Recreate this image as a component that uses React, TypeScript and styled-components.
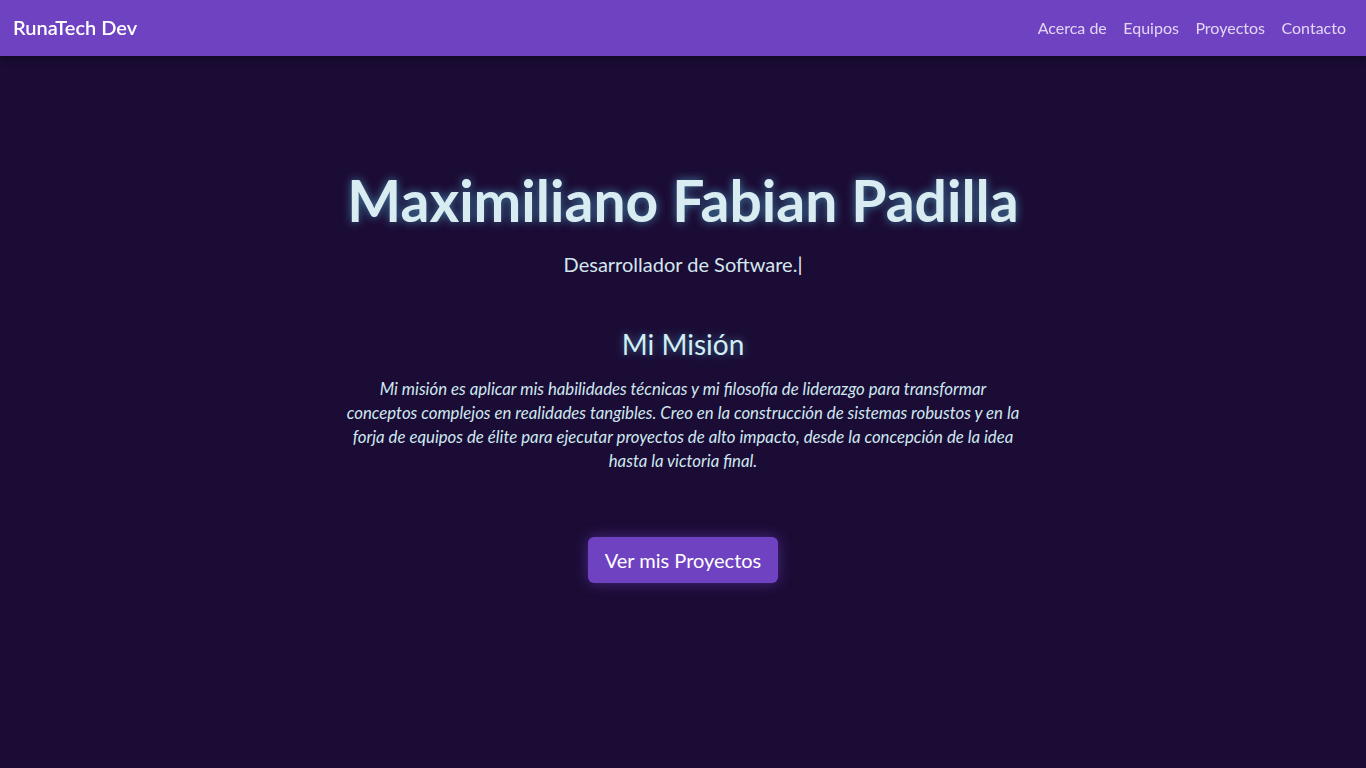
import React from "react";
import styled, { createGlobalStyle } from "styled-components";

const GlobalStyle = createGlobalStyle`
  html, body {
    margin: 0;
    padding: 0;
    background: #1b0c35;
    font-family: Lato, "Open Sans", sans-serif;
  }
  ::-webkit-scrollbar {
    width: 4px;
  }
  ::-webkit-scrollbar-track {
    background: #1b0c35;
  }
  ::-webkit-scrollbar-thumb {
    background: #8a8494;
  }
`;

const Header = styled.header`
  position: fixed;
  top: 0;
  left: 0;
  right: 0;
  height: 56px;
  display: flex;
  align-items: center;
  justify-content: space-between;
  padding: 0 20px 0 13px;
  background: #6f42c1;
  box-shadow: 0 2px 8px rgba(0, 0, 0, 0.45);
  z-index: 10;
`;

const Brand = styled.a`
  color: #ffffff;
  font-size: 20px;
  font-weight: 600;
  line-height: 24px;
  margin-top: -2px;
  text-decoration: none;
`;

const Nav = styled.nav`
  display: flex;
  gap: 16.5px;
  margin-top: -2px;
`;

const NavLink = styled.a`
  color: #e2d6f6;
  font-size: 16px;
  text-decoration: none;
`;

const Hero = styled.section`
  min-height: 100vh;
  box-sizing: border-box;
  display: flex;
  flex-direction: column;
  align-items: center;
  padding-top: 168px;
  text-align: center;
`;

const Title = styled.h1`
  margin: 0;
  font-size: 57px;
  font-weight: 700;
  line-height: 64px;
  color: #d9ecf2;
  text-shadow: 0 0 10px rgba(100, 220, 255, 0.55);
`;

const Subtitle = styled.p`
  margin: 18px 0 0;
  font-size: 20px;
  line-height: 28px;
  color: #d4e6ee;
`;

const Cursor = styled.span`
  color: #e6f2f6;
`;

const MissionTitle = styled.h2`
  margin: 49px 0 0;
  font-size: 28px;
  font-weight: 400;
  line-height: 34px;
  color: #d2eef4;
  text-shadow: 0 0 8px rgba(100, 220, 255, 0.45);
`;

const MissionText = styled.p`
  margin: 16px 0 0;
  max-width: 680px;
  font-size: 16.8px;
  font-style: italic;
  line-height: 24px;
  color: #cfe8f0;
`;

const Button = styled.a`
  margin-top: 64px;
  padding: 10px 17px;
  background: #6f42c1;
  border-radius: 6px;
  color: #ffffff;
  font-size: 20px;
  line-height: 26px;
  text-decoration: none;
  box-shadow: 0 0 14px rgba(111, 66, 193, 0.55);
`;

const Section = styled.section`
  min-height: 100vh;
`;

export default function App() {
  return (
    <>
      <GlobalStyle />
      <Header>
        <Brand href="#">RunaTech Dev</Brand>
        <Nav>
          <NavLink href="#acerca">Acerca de</NavLink>
          <NavLink href="#equipos">Equipos</NavLink>
          <NavLink href="#proyectos">Proyectos</NavLink>
          <NavLink href="#contacto">Contacto</NavLink>
        </Nav>
      </Header>
      <Hero>
        <Title>Maximiliano Fabian Padilla</Title>
        <Subtitle>
          Desarrollador de Software.<Cursor>|</Cursor>
        </Subtitle>
        <MissionTitle>Mi Misión</MissionTitle>
        <MissionText>
          Mi misión es aplicar mis habilidades técnicas y mi filosofía de liderazgo para
          transformar conceptos complejos en realidades tangibles. Creo en la construcción de
          sistemas robustos y en la forja de equipos de élite para ejecutar proyectos de alto
          impacto, desde la concepción de la idea hasta la victoria final.
        </MissionText>
        <Button href="#proyectos">Ver mis Proyectos</Button>
      </Hero>
      <Section id="acerca" />
      <Section id="equipos" />
      <Section id="proyectos" />
      <Section id="contacto" />
    </>
  );
}
